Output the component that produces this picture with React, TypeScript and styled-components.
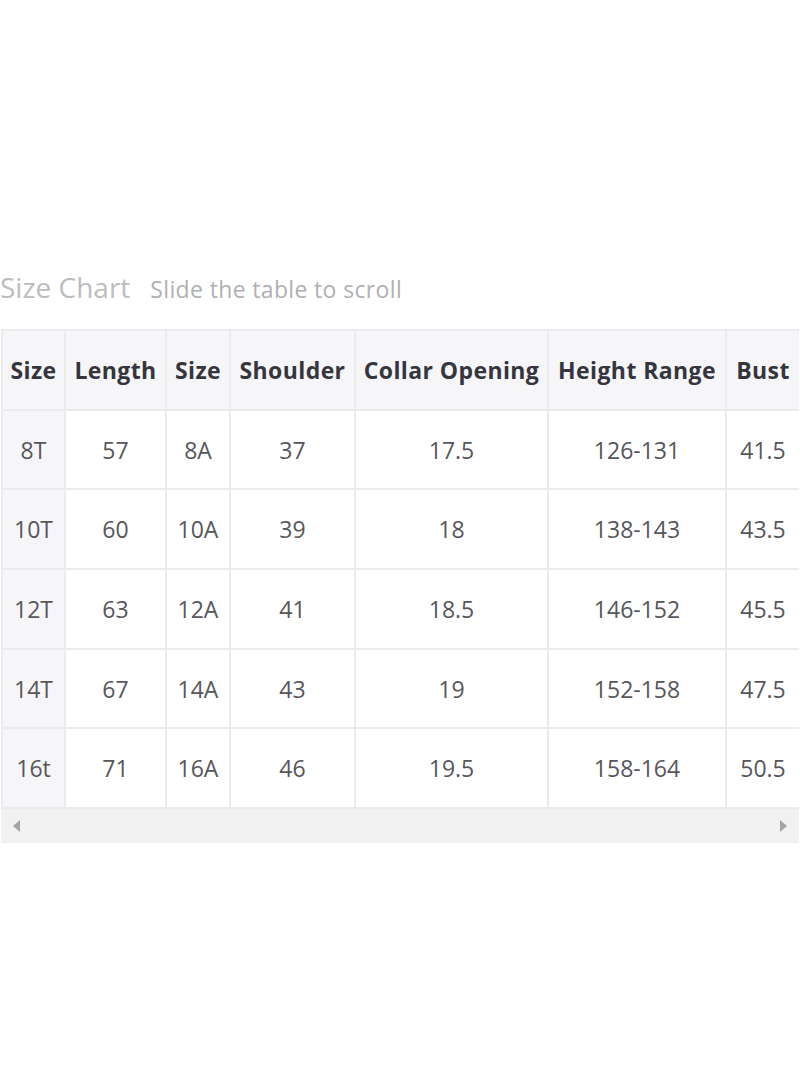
import React from "react";
import styled, { createGlobalStyle } from "styled-components";

const GlobalStyle = createGlobalStyle`
  html, body { margin: 0; padding: 0; background: #ffffff; }
  body { font-family: "Open Sans", "Liberation Sans", sans-serif; }
`;

const Page = styled.div`
  width: 800px;
  height: 1091px;
  padding-top: 267px;
  box-sizing: border-box;
`;

const TitleRow = styled.div`
  display: flex;
  align-items: baseline;
  gap: 20px;
  height: 42px;
  margin-bottom: 20px;
`;

const Title = styled.h2`
  margin: 0;
  font-size: 28px;
  font-weight: 400;
  color: #bdbdc0;
  line-height: 40px;
`;

const Hint = styled.span`
  font-size: 23px;
  letter-spacing: 0.35px;
  color: #b0b0b3;
`;

const Scroller = styled.div`
  margin-left: 1px;
  width: 798px;
  overflow: hidden;
`;

const Table = styled.table`
  border-collapse: collapse;
  table-layout: fixed;
  width: 798px;
  border: 2px solid #ebebee;
`;

const Cell = styled.td<{ $head?: boolean; $first?: boolean }>`
  height: 77.7px;
  padding: 0 4px;
  border: 2px solid #ebebee;
  text-align: center;
  white-space: nowrap;
  font-size: 23px;
  letter-spacing: ${(p) => (p.$head ? "0.4px" : "0")};
  font-weight: ${(p) => (p.$head ? 700 : 400)};
  color: ${(p) => (p.$head ? "#34353d" : "#56565c")};
  background: ${(p) => (p.$head || p.$first ? "#f6f6f8" : "#ffffff")};
`;

const ScrollBar = styled.div`
  width: 798px;
  margin-left: 1px;
  height: 34px;
  background: #f1f1f1;
  display: flex;
  align-items: center;
  justify-content: space-between;
  padding: 0 12px;
  box-sizing: border-box;
`;

const Arrow = styled.span<{ $dir: "left" | "right" }>`
  width: 0;
  height: 0;
  border-top: 6px solid transparent;
  border-bottom: 6px solid transparent;
  ${(p) =>
    p.$dir === "left"
      ? "border-right: 7px solid #a3a3a3;"
      : "border-left: 7px solid #a3a3a3;"}
`;

const widths = [63, 101, 64, 125, 193, 178, 74];
const head = ["Size", "Length", "Size", "Shoulder", "Collar Opening", "Height Range", "Bust"];
const rows = [
  ["8T", "57", "8A", "37", "17.5", "126-131", "41.5"],
  ["10T", "60", "10A", "39", "18", "138-143", "43.5"],
  ["12T", "63", "12A", "41", "18.5", "146-152", "45.5"],
  ["14T", "67", "14A", "43", "19", "152-158", "47.5"],
  ["16t", "71", "16A", "46", "19.5", "158-164", "50.5"],
];

export default function App() {
  return (
    <Page>
      <GlobalStyle />
      <TitleRow>
        <Title>Size Chart</Title>
        <Hint>Slide the table to scroll</Hint>
      </TitleRow>
      <Scroller>
        <Table>
          <colgroup>
            {widths.map((w, i) => (
              <col key={i} style={{ width: w }} />
            ))}
          </colgroup>
          <tbody>
            <tr>
              {head.map((h, i) => (
                <Cell as="th" key={i} $head>
                  {h}
                </Cell>
              ))}
            </tr>
            {rows.map((r, ri) => (
              <tr key={ri}>
                {r.map((c, ci) => (
                  <Cell key={ci} $first={ci === 0}>
                    {c}
                  </Cell>
                ))}
              </tr>
            ))}
          </tbody>
        </Table>
      </Scroller>
      <ScrollBar>
        <Arrow $dir="left" />
        <Arrow $dir="right" />
      </ScrollBar>
    </Page>
  );
}
